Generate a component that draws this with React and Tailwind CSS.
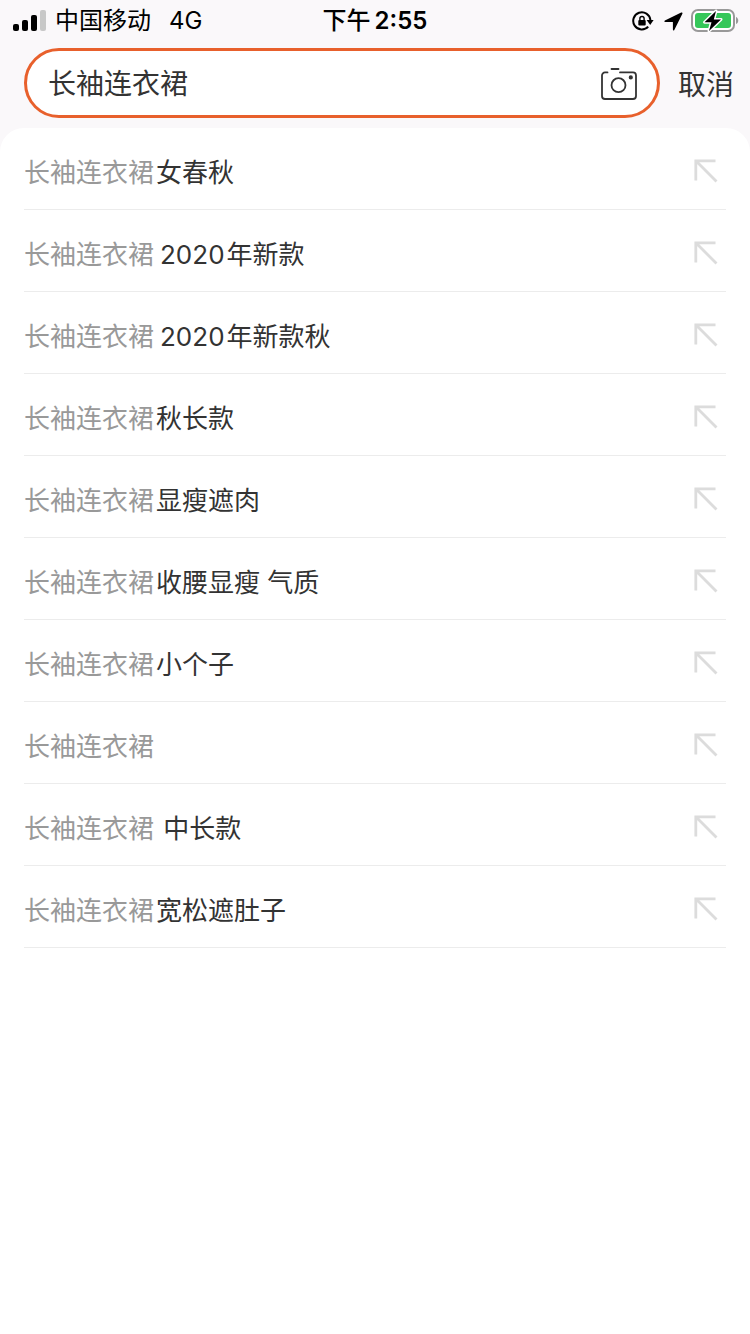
import { useState } from "react";

const KEYWORD = "长袖连衣裙";

const SUGGESTIONS = [
  { id: 1, rest: "女春秋" },
  { id: 2, year: "2020", rest: "年新款" },
  { id: 3, year: "2020", rest: "年新款秋" },
  { id: 4, rest: "秋长款" },
  { id: 5, rest: "显瘦遮肉" },
  { id: 6, rest: "收腰显瘦 气质" },
  { id: 7, rest: "小个子" },
  { id: 8, rest: "" },
  { id: 9, rest: " 中长款" },
  { id: 10, rest: "宽松遮肚子" },
];

function SignalIcon() {
  return (
    <svg width="34" height="22" viewBox="0 0 34 22" aria-hidden="true">
      <rect x="1" y="14" width="6" height="7" rx="2" />
      <rect x="10" y="10" width="6" height="11" rx="2" />
      <rect x="19" y="5" width="6" height="16" rx="2" />
      <rect x="28" y="0" width="6" height="21" rx="2" fill="#c8c8c8" />
    </svg>
  );
}

function RotationLockIcon() {
  return (
    <svg width="22" height="20" viewBox="0 0 22 20" fill="none" aria-hidden="true">
      <path d="M16.2 15.6A8.6 8.6 0 1 1 18.4 9" stroke="#000" strokeWidth="2" />
      <path d="M14.6 9h7l-3.4 5z" fill="#000" />
      <rect x="6.3" y="9" width="7.4" height="5.4" rx="1" fill="#000" />
      <path d="M7.9 9.4V7.6a2.1 2.1 0 0 1 4.2 0v1.8" stroke="#000" strokeWidth="1.4" />
    </svg>
  );
}

function LocationIcon() {
  return (
    <svg width="19" height="19" viewBox="0 0 19 19" aria-hidden="true">
      <path d="M17.2.5.9 8.6c-.9.5-.7 1.4.4 1.4h7.2c.3 0 .4.1.4.4v7.2c0 1.1 1 1.3 1.4.4L18.4 1.7c.4-.9-.3-1.6-1.2-1.2z" />
    </svg>
  );
}

function BatteryIcon() {
  return (
    <svg width="48" height="24" viewBox="0 0 48 24" aria-hidden="true">
      <rect x="1" y="1" width="42" height="21" rx="6" fill="#fff" stroke="#999" strokeWidth="2" />
      <rect x="4" y="4" width="36" height="15" rx="3" fill="#35c759" />
      <path d="M45 8c3 1 3 6 0 7z" fill="#999" />
      <path
        d="M25 2 13.5 13.2h7L18 22l12-11.6h-7.2z"
        stroke="#fff"
        strokeWidth="3"
        strokeLinejoin="round"
        paintOrder="stroke"
      />
    </svg>
  );
}

function CameraIcon() {
  return (
    <svg
      width="36"
      height="34"
      viewBox="0 0 36 34"
      fill="none"
      stroke="#333"
      strokeWidth="1.8"
      strokeLinecap="round"
      aria-hidden="true"
    >
      <path d="M6.5 5.4H4a3 3 0 0 0-3 3V29a3 3 0 0 0 3 3h28a3 3 0 0 0 3-3V8.4a3 3 0 0 0-3-3H19" />
      <path d="M10.5 2h7" />
      <circle cx="17.5" cy="18.2" r="7" />
      <circle cx="29.8" cy="10.4" r="1.2" fill="#333" />
    </svg>
  );
}

function FillArrowIcon() {
  return (
    <svg
      width="24"
      height="24"
      viewBox="0 0 24 24"
      fill="none"
      stroke="#dcdcdc"
      strokeWidth="2.8"
      aria-hidden="true"
    >
      <path d="M21.5 1.8H1.8v19.7M1.8 1.8l20.7 20.7" />
    </svg>
  );
}

function StatusBar() {
  return (
    <div className="grid h-10 grid-cols-3 items-center px-3 pt-0.5 text-2xl text-black">
      <div className="flex items-center">
        <SignalIcon />
        <span className="ml-[9px]">中国移动</span>
        <span className="ml-[18px]">4G</span>
      </div>
      <div className="text-center font-medium">
        下午<span className="ml-1 font-semibold">2:55</span>
      </div>
      <div className="-mr-px flex items-center justify-end">
        <RotationLockIcon />
        <span className="ml-[10px]">
          <LocationIcon />
        </span>
        <span className="ml-2">
          <BatteryIcon />
        </span>
      </div>
    </div>
  );
}

export default function App() {
  const [search, setSearch] = useState(KEYWORD);

  return (
    <div className="min-h-screen bg-[#faf8fa] font-['Inter','Noto_Sans_CJK_SC',sans-serif] text-[#333]">
      <StatusBar />
      <header className="flex items-center pb-[10px] pl-6 pr-4 pt-2">
        <form
          className="flex h-[70px] flex-1 items-center rounded-full border-3 border-[#e8602c] bg-white pl-[21px] pr-5 pt-0.5"
          onSubmit={(e) => e.preventDefault()}
        >
          <input
            type="text"
            aria-label="搜索"
            className="min-w-0 flex-1 bg-transparent text-[28px] leading-10 outline-none"
            value={search}
            onChange={(e) => setSearch(e.target.value)}
          />
          <button type="button" aria-label="拍照搜索">
            <CameraIcon />
          </button>
        </form>
        <button type="button" className="ml-[18px] pt-1 text-[28px] leading-10">
          取消
        </button>
      </header>
      <main className="min-h-[calc(100vh-128px)] rounded-t-3xl bg-white px-6">
        <ul>
          {SUGGESTIONS.map((item) => (
            <li key={item.id} className="border-b border-[#ececec]">
              <button
                type="button"
                className="flex h-[81px] w-full items-center justify-between pr-2 text-left text-[26px] leading-10"
                onClick={() => setSearch(KEYWORD + (item.year || "") + item.rest)}
              >
                <span className="whitespace-pre pt-2">
                  <span className="mr-0.5 text-[#999]">{KEYWORD}</span>
                  {item.year && <span className="ml-1 mr-0.5">{item.year}</span>}
                  {item.rest}
                </span>
                <span className="pt-1">
                  <FillArrowIcon />
                </span>
              </button>
            </li>
          ))}
        </ul>
      </main>
    </div>
  );
}
